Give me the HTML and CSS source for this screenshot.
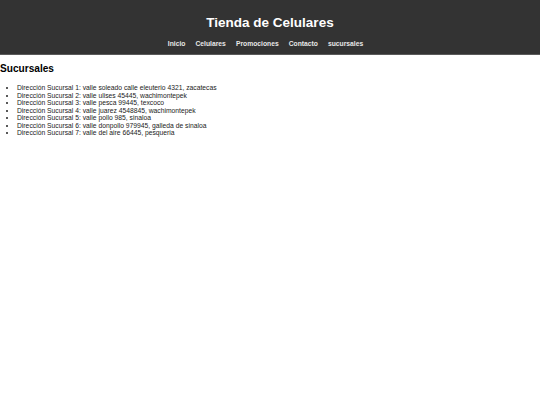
FILE: index.html
```html
<!DOCTYPE html>
<html lang="es">
<head>
<meta charset="utf-8">
<title>Tienda de Celulares</title>
<link rel="stylesheet" href="styles.css">
</head>
<body>
<header class="site-header">
  <h1 class="site-title">Tienda de Celulares</h1>
  <nav class="site-nav">
    <a href="#">Inicio</a>
    <a href="#">Celulares</a>
    <a href="#">Promociones</a>
    <a href="#">Contacto</a>
    <a href="#">sucursales</a>
  </nav>
</header>
<main class="content">
  <h2 class="section-title">Sucursales</h2>
  <ul class="branch-list">
    <li>Dirección Sucursal 1: valle soleado calle eleuterio 4321, zacatecas</li>
    <li>Dirección Sucursal 2: valle ulises 45445, wachimontepek</li>
    <li>Dirección Sucursal 3: valle pesca 99445, texcoco</li>
    <li>Dirección Sucursal 4: valle juarez 4548845, wachimontepek</li>
    <li>Dirección Sucursal 5: valle pollo 985, sinaloa</li>
    <li>Dirección Sucursal 6: valle donpollo 979945, galleda de sinaloa</li>
    <li>Dirección Sucursal 7: valle del aire 66445, pesqueria</li>
  </ul>
</main>
</body>
</html>
```
FILE: styles.css
```css
html, body {
  margin: 0;
  padding: 0;
  background: #ffffff;
  font-family: "Liberation Sans", Arial, sans-serif;
  color: #000;
}
.site-header {
  background: #333333;
  color: #ffffff;
  text-align: center;
  padding: 15px 0 6px;
  border-bottom: 1px solid #5a5a5a;
}
.site-title {
  margin: 0;
  font-size: 13.5px;
  font-weight: bold;
  line-height: 16px;
}
.site-nav {
  margin-top: 9px;
  padding-right: 9px;
  display: flex;
  justify-content: center;
  gap: 10px;
  font-size: 6.75px;
  line-height: 8px;
}
.site-nav a {
  color: #e8e8e8;
  font-weight: bold;
  text-decoration: none;
}
.section-title {
  margin: 8px 0 0;
  font-size: 10.125px;
  line-height: 12px;
  font-weight: bold;
}
.branch-list {
  margin: 9px 0 0;
  padding-left: 17px;
  font-size: 6.75px;
  line-height: 7.5px;
  color: #222;
}
```
